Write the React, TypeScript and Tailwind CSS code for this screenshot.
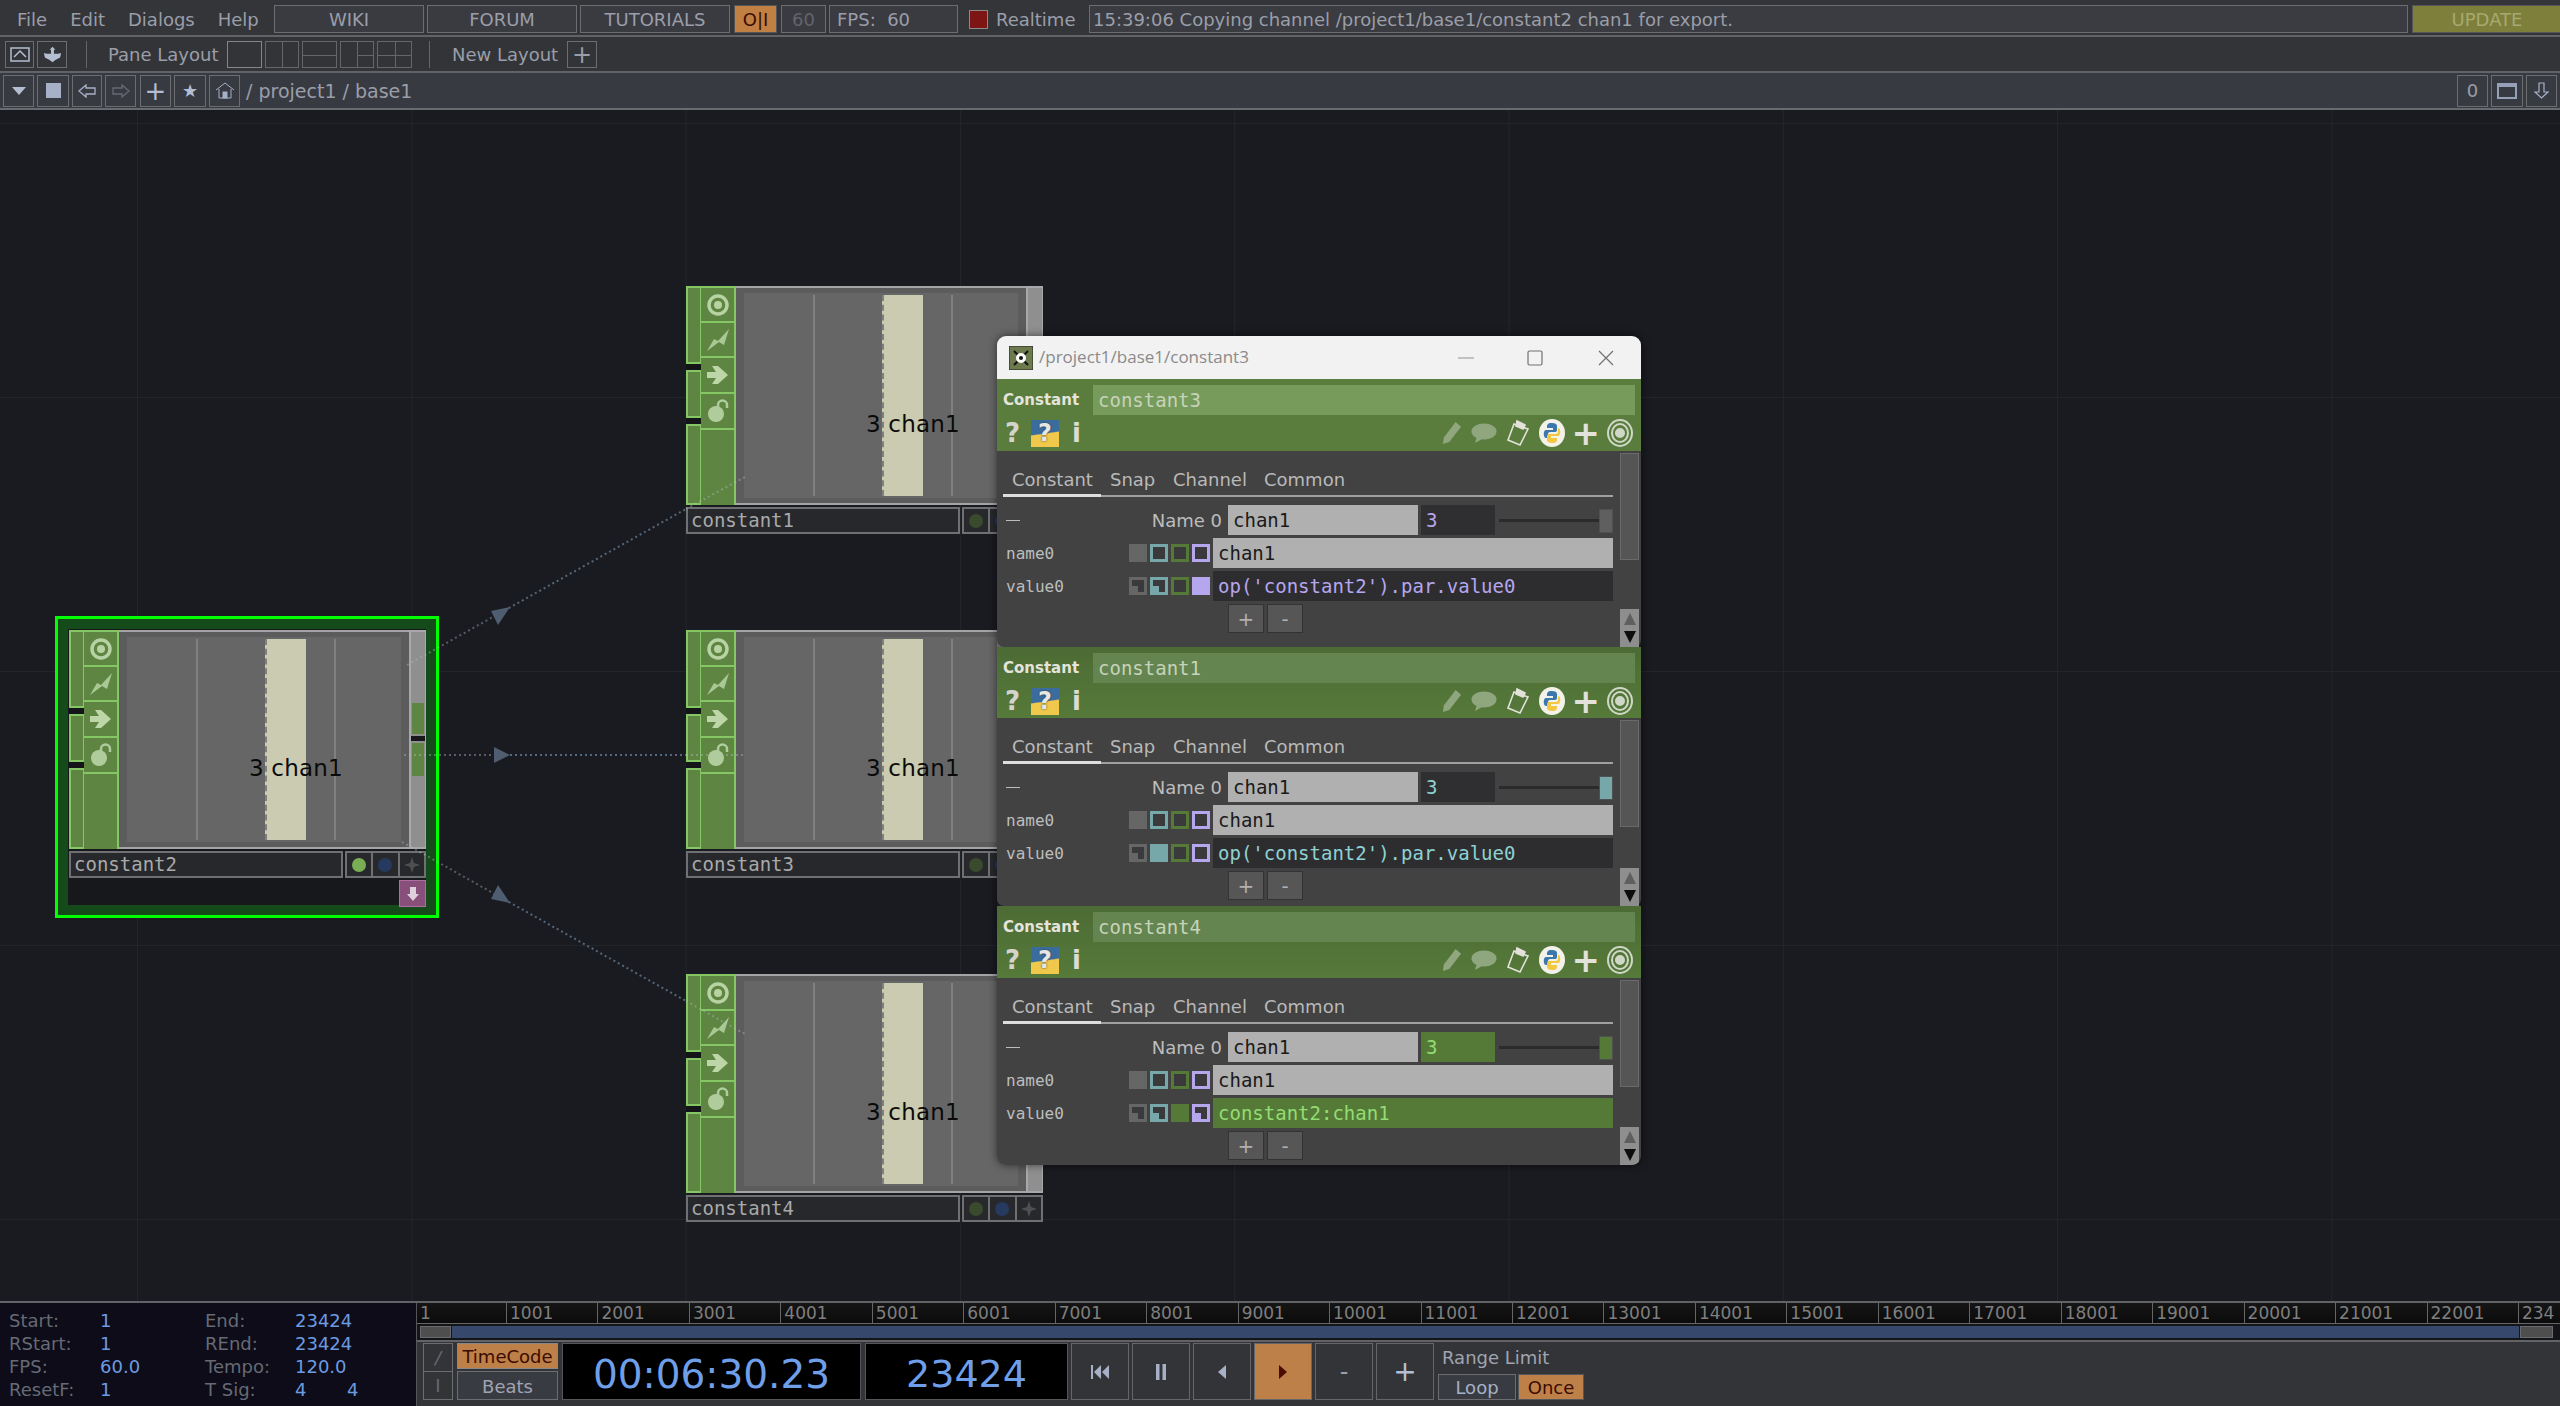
import type { ReactNode } from "react";

const sans = "font-['DejaVu_Sans',sans-serif]";
const mono = "font-['DejaVu_Sans_Mono',monospace]";

function BarBox({ className = "", children }: { className?: string; children?: ReactNode }) {
  return (
    <div className={`flex shrink-0 items-center justify-center border border-[#6c6d70] ${className}`}>
      {children}
    </div>
  );
}

function LayoutBox({ className = "", children }: { className?: string; children?: ReactNode }) {
  return <div className={`relative h-[27px] shrink-0 border border-[#65666a] ${className}`}>{children}</div>;
}

function TopBars() {
  return (
    <div className="shrink-0">
      {/* menu row */}
      <div className="flex h-[37px] items-center border-b-2 border-[#626366] bg-[#343539] pt-[3px] text-[18px] text-[#9a9ea9]">
        <div className="flex w-[274px] shrink-0 gap-[23px] pl-[17px]">
          <span>File</span>
          <span>Edit</span>
          <span>Dialogs</span>
          <span>Help</span>
        </div>
        <div className="flex h-[28px] gap-[3px]">
          <BarBox className="w-[150px] bg-[#3a3b41]">WIKI</BarBox>
          <BarBox className="w-[150px] bg-[#3a3b41]">FORUM</BarBox>
          <BarBox className="w-[150px] bg-[#3a3b41]">TUTORIALS</BarBox>
          <BarBox className="ml-[1px] w-[43px] border-[#555] bg-[#c07f43] text-[#3b0b00]">O|I</BarBox>
          <BarBox className="ml-[1px] w-[45px] bg-[#3a3b41] text-[#62646a]">60</BarBox>
          <BarBox className="w-[129px] justify-start bg-[#3a3b41] pl-[7px]">FPS:&nbsp; 60</BarBox>
          <div className="ml-[8px] h-[19px] w-[19px] self-center border border-[#8a8a8a] bg-[#7d1515]" />
          <span className="ml-[5px] w-[90px] self-center">Realtime</span>
          <BarBox className="w-[1319px] justify-start bg-[#3b3c41] pl-[3px]">
            15:39:06 Copying channel /project1/base1/constant2 chan1 for export.
          </BarBox>
          <BarBox className="ml-[1px] w-[150px] border-[#55565a] bg-[#7f7f3c] text-[#a6a970]">UPDATE</BarBox>
        </div>
      </div>
      {/* pane layout row */}
      <div className="flex h-[36px] items-center border-b-2 border-[#626366] bg-[#333438] pl-[5px] pt-[1px] text-[18px] text-[#9a9ea9]">
        <BarBox className="h-[27px] w-[29px]">
          <svg width="20" height="15" viewBox="0 0 20 15" fill="none" stroke="#b4bed2" strokeWidth="1.5">
            <rect x="1" y="1" width="18" height="13" />
            <path d="M4 10 L10 4 L16 10" />
          </svg>
        </BarBox>
        <BarBox className="ml-[3px] h-[27px] w-[30px]">
          <svg width="21" height="17" viewBox="0 0 22 22" fill="#b4bed2" preserveAspectRatio="none">
            <path d="M11 1 L14 5 L12.5 5 L12.5 10 L17 10 L20 9 L19 15 L14 18 L11 21 L8 18 L3 15 L2 9 L5 10 L9.5 10 L9.5 5 L8 5 Z" />
          </svg>
        </BarBox>
        <div className="ml-[19px] h-[27px] w-px bg-[#65666a]" />
        <span className="ml-[21px] w-[119px] shrink-0">Pane Layout</span>
        <div className="flex gap-[3px]">
          <LayoutBox className="w-[35px] border-[#85868a]" />
          <LayoutBox className="w-[34px]">
            <div className="absolute inset-y-0 left-1/2 w-px bg-[#65666a]" />
          </LayoutBox>
          <LayoutBox className="w-[35px]">
            <div className="absolute inset-x-0 top-1/2 h-px bg-[#65666a]" />
          </LayoutBox>
          <LayoutBox className="w-[34px]">
            <div className="absolute inset-y-0 left-1/2 w-px bg-[#65666a]" />
            <div className="absolute right-0 top-1/2 h-px w-1/2 bg-[#65666a]" />
          </LayoutBox>
          <LayoutBox className="w-[35px]">
            <div className="absolute inset-y-0 left-1/2 w-px bg-[#65666a]" />
            <div className="absolute inset-x-0 top-1/2 h-px bg-[#65666a]" />
          </LayoutBox>
        </div>
        <div className="ml-[17px] h-[27px] w-px bg-[#65666a]" />
        <span className="ml-[22px] w-[115px] shrink-0">New Layout</span>
        <BarBox className="h-[27px] w-[30px] text-[24px] leading-none">+</BarBox>
      </div>
      {/* path row */}
      <div className="flex h-[37px] items-center border-b-2 border-[#6a6b6e] bg-[#383a42] pl-[3px] text-[18px] text-[#9a9ea9]">
        <div className="flex gap-[3px]">
          <BarBox className="h-[32px] w-[31px]">
            <svg width="14" height="8" viewBox="0 0 14 8" fill="#b4bed2"><path d="M0 0 H14 L7 8 Z" /></svg>
          </BarBox>
          <BarBox className="h-[32px] w-[32px]">
            <div className="h-[15px] w-[15px] bg-[#a6b0c6]" />
          </BarBox>
          <BarBox className="h-[32px] w-[30px]">
            <svg width="18" height="14" viewBox="0 0 18 14" fill="none" stroke="#a6b0c6" strokeWidth="1.3"><path d="M1 7 L8 1 V4 H17 V10 H8 V13 Z" /></svg>
          </BarBox>
          <BarBox className="h-[32px] w-[31px]">
            <svg width="18" height="14" viewBox="0 0 18 14" fill="none" stroke="#666a74" strokeWidth="1.3"><path d="M17 7 L10 1 V4 H1 V10 H10 V13 Z" /></svg>
          </BarBox>
          <BarBox className="ml-[1px] h-[32px] w-[31px] text-[26px] leading-none text-[#b4bed2]">+</BarBox>
          <BarBox className="h-[32px] w-[32px] text-[18px] text-[#b4bed2]">★</BarBox>
          <BarBox className="h-[32px] w-[31px]">
            <svg width="20" height="17" viewBox="0 0 20 17" fill="none" stroke="#a6b0c6" strokeWidth="1">
              <path d="M1 8 L10 1 L19 8 M4 7 V16 H16 V7" />
              <rect x="8" y="10" width="4" height="6" fill="#a6b0c6" />
            </svg>
          </BarBox>
        </div>
        <span className="ml-[6px] whitespace-pre pt-[1px] text-[19px]">/ project1 / base1</span>
        <div className="ml-auto flex gap-[3px] pr-[3px]">
          <BarBox className="h-[32px] w-[31px]">0</BarBox>
          <BarBox className="h-[32px] w-[32px]">
            <div className="h-[16px] w-[20px] border-2 border-t-[4px] border-[#95a0b8]" />
          </BarBox>
          <BarBox className="h-[32px] w-[31px]">
            <svg width="15" height="17" viewBox="0 0 15 17" fill="none" stroke="#a6b0c6" strokeWidth="1.2"><path d="M5 1 H10 V10 H14 L7.5 16 L1 10 H5 Z" /></svg>
          </BarBox>
        </div>
      </div>
    </div>
  );
}

function NodeCell({ className = "", children }: { className?: string; children?: ReactNode }) {
  return (
    <div className={`flex w-full items-center justify-center border-b-2 border-[#85c764] ${className}`}>{children}</div>
  );
}

function NodeTarget() {
  return (
    <svg width="22" height="22" viewBox="0 0 22 22" fill="none">
      <circle cx="11" cy="11" r="9" stroke="#b7d2a3" strokeWidth="3.5" />
      <circle cx="11" cy="11" r="4" fill="#b7d2a3" />
    </svg>
  );
}

function Node({ name, className, selected }: { name: string; className: string; selected?: boolean }) {
  return (
    <div className={`absolute w-[357px] ${className}`}>
      <div className="flex h-[219px]">
        <div className="flex w-[15px] shrink-0 flex-col bg-[#141518]">
          <div className="h-[78px] border-2 border-r border-[#85c764] bg-[#5f8543]" />
          <div className="mt-[6px] h-[48px] border-2 border-r border-[#85c764] bg-[#5f8543]" />
          <div className="mt-[6px] flex-1 border-2 border-r border-[#85c764] bg-[#5f8543]" />
        </div>
        <div className="flex w-[35px] shrink-0 flex-col border-2 border-b-0 border-l-0 border-[#85c764] bg-[#5f8543]">
          <NodeCell className="h-[35px]"><NodeTarget /></NodeCell>
          <NodeCell className="h-[35px]">
            <svg width="24" height="24" viewBox="0 0 24 24" fill="#a9c893">
              <path d="M1 23 L8 11 L12 13 L23 1 L18 17 L13 14 Z" />
            </svg>
          </NodeCell>
          <NodeCell className="h-[36px]">
            <svg width="22" height="20" viewBox="0 0 22 20" fill="#bcd6a8">
              <path d="M0 7 H9 L5 1 H11 L21 10 L11 19 H5 L9 13 H0 Z" />
            </svg>
          </NodeCell>
          <NodeCell className="h-[36px]">
            <svg width="22" height="24" viewBox="0 0 22 24">
              <circle cx="9" cy="15" r="8" fill="#b0cc9b" />
              <path d="M11 8 V6 a4.5 4.5 0 0 1 9 0 V9" fill="none" stroke="#b0cc9b" strokeWidth="2.5" />
            </svg>
          </NodeCell>
          <div className="flex-1" />
        </div>
        <div className="flex min-w-0 flex-1 border-y-2 border-[#a4a4a6] bg-[#5c5c5c] px-[8px] py-[5px]">
          <div className="relative flex-1 bg-[#666666] pt-[2px]">
            <div className="absolute inset-y-[2px] left-[69px] w-[2px] bg-[#808080]" />
            <div className="absolute inset-y-[2px] left-[207px] w-[2px] bg-[#808080]" />
            <div className="absolute inset-y-[2px] left-[138px] w-[41px] border-l-2 border-dashed border-l-[#7f7f7f] bg-[#cbcbb1]" />
            <span className={`absolute left-[122px] top-[120px] text-[23px] leading-none tracking-[0.2px] text-[#0a0a0a] ${sans}`}>
              3 chan1
            </span>
          </div>
        </div>
        <div className="flex w-[17px] shrink-0 flex-col border-y-2 border-l-2 border-r border-[#a8a8ac] bg-[#8f8f8f]">
          {selected && (
            <>
              <div className="mx-[1px] mt-[71px] h-[31px] bg-[#5f8543]" />
              <div className="mt-[2px] h-[5px] bg-[#17181c]" />
              <div className="mx-[1px] mt-[2px] h-[33px] bg-[#5f8543]" />
            </>
          )}
        </div>
      </div>
      <div className="mt-[2px] flex h-[27px] gap-[2px]">
        <div className={`flex flex-1 items-center border-2 border-[#6f7072] bg-[#27282c] pl-[3px] text-[19px] text-[#a9a9a9] ${mono}`}>
          {name}
        </div>
        <div className="flex w-[81px] shrink-0 border-2 border-[#6f7072] bg-[#27282c]">
          <div className="flex flex-1 items-center justify-center border-r-2 border-[#6f7072]">
            <div className={`h-[14px] w-[14px] rounded-full ${selected ? "bg-[#79ae55]" : "bg-[#394a2d]"}`} />
          </div>
          <div className="flex flex-1 items-center justify-center border-r-2 border-[#6f7072]">
            <div className="h-[14px] w-[14px] rounded-full bg-[#26395f]" />
          </div>
          <div className="flex flex-1 items-center justify-center">
            <svg width="16" height="16" viewBox="0 0 16 16" fill="#4f4f4f"><path d="M8 0 L10 6 L16 8 L10 10 L8 16 L6 10 L0 8 L6 6 Z" /></svg>
          </div>
        </div>
      </div>
      {selected && (
        <div className="ml-auto mt-[2px] flex h-[27px] w-[27px] items-center justify-center border border-[#b06ea0] bg-[#884f7b]">
          <svg width="14" height="14" viewBox="0 0 14 14" fill="#dfcfdb"><path d="M4 0 H10 V7 H13 L7 14 L1 7 H4 Z" /></svg>
        </div>
      )}
    </div>
  );
}

function Wires() {
  return (
    <svg className="absolute inset-0 z-10" width="2560" height="1192" viewBox="0 1 2560 1192" fill="none">
      <g stroke="#55677a" strokeWidth="2" strokeDasharray="2 3">
        <path d="M500 504 L686 400" />
        <path d="M500 646 L686 646" />
        <path d="M500 788 L686 892" />
      </g>
      <g stroke="#b6bec6" strokeWidth="2" strokeDasharray="2 3" opacity="0.4">
        <path d="M407 556 L500 504" />
        <path d="M404 646 L500 646" />
        <path d="M402 733 L500 788" />
        <path d="M686 400 L745 368" />
        <path d="M686 646 L745 646" />
        <path d="M686 892 L745 925" />
      </g>
      <g fill="#4e5e70">
        <path d="M510 498 L491 502 L498 516 Z" />
        <path d="M510 646 L494 638 L494 654 Z" />
        <path d="M510 794 L498 776 L491 790 Z" />
      </g>
    </svg>
  );
}

type SquareKind = "solid" | "outline" | "half";

function Square({ kind, color }: { kind: SquareKind; color: string }) {
  return (
    <svg width="18" height="18" viewBox="0 0 18 18" className="shrink-0">
      <rect width="18" height="18" fill={color} />
      {kind === "outline" && <rect x="3" y="3" width="12" height="12" fill="#3a3a3c" />}
      {kind === "half" && <path d="M3 3 H15 V15 H9 V9 H3 Z" fill="#3a3a3c" />}
    </svg>
  );
}

function HeaderIcons() {
  return (
    <div className="flex h-[28px] items-center pl-[8px] pr-[8px]">
      <span className="w-[26px] text-[26px] font-bold leading-none text-[#d4d4cc]">?</span>
      <div className="flex h-[27px] w-[28px] items-center justify-center bg-[linear-gradient(172deg,#3a6d9e_48%,#f0c94c_52%)] text-[24px] font-bold leading-none text-[#e6e6e6] [text-shadow:0_0_2px_#333]">
        ?
      </div>
      <span className="ml-[13px] text-[26px] font-bold leading-none text-[#dcdcd4]">i</span>
      <div className="ml-auto flex items-center gap-[8px]">
        <svg width="20" height="26" viewBox="0 0 22 26" fill="#8fa67f">
          <path d="M15 1 L21 6 L8 23 L1 25 L2 18 Z" />
        </svg>
        <svg className="ml-[1px]" width="26" height="20" viewBox="0 0 26 20" fill="#8fa67f">
          <ellipse cx="13" cy="8.5" rx="12.5" ry="8" />
          <path d="M6 13 L4 20 L13 15 Z" />
        </svg>
        <svg width="26" height="28" viewBox="0 0 26 28" fill="none" stroke="#e2e2da" strokeWidth="1.6">
          <path d="M9 5 L23 10 L15 26 L3 21 Z" />
          <path d="M12 2 L20 6 L18 10 L11 7 Z" fill="#e2e2da" />
        </svg>
        <svg width="26" height="28" viewBox="0 0 26 28">
          <ellipse cx="13" cy="14" rx="13" ry="14" fill="#f2f2ea" />
          <path d="M13 4 C8 4 8 6 8 9 H14 V11 H7 C4 11 4 19 7 19 H9 V15 C9 13 11 13 13 13 H16 C18 13 18 11 18 10 V7 C18 5 16 4 13 4 Z" fill="#3a78ad" />
          <path d="M13 24 C18 24 18 22 18 19 H12 V17 H19 C22 17 22 9 19 9 V13 C19 15 17 15 13 15 H10 C8 15 8 17 8 18 V21 C8 23 10 24 13 24 Z" fill="#f3c742" />
        </svg>
        <span className={`-mx-[1px] text-[34px] font-bold leading-[26px] text-[#e2e2da] ${sans}`}>+</span>
        <svg width="26" height="28" viewBox="0 0 26 28" fill="none" stroke="#cfd8c6" strokeWidth="2">
          <ellipse cx="13" cy="14" rx="12" ry="13" />
          <ellipse cx="13" cy="14" rx="8" ry="9" />
          <circle cx="13" cy="14" r="4" fill="#cfd8c6" />
        </svg>
      </div>
    </div>
  );
}

type SectionProps = {
  name: string;
  accent: string;
  thumb: string;
  green?: boolean;
  active?: boolean;
  value: string;
  squares: SquareKind[];
  headerClass: string;
  panelClass: string;
};

function ParamSection({ name, accent, thumb, green, active, value, squares, headerClass, panelClass }: SectionProps) {
  const colors = ["#666666", "#76a8aa", "#557a38", "#b6a6ee"];
  return (
    <div className="shrink-0">
      <div className={`${headerClass} ${active ? "bg-[#5a7d3d]" : "bg-[linear-gradient(#4c6b35,#567a3a)]"} pt-[6px]`}>
        <div className="flex h-[30px] items-center">
          <span className="w-[96px] shrink-0 pl-[6px] text-[15px] font-bold text-[#e4e4dc]">Constant</span>
          <div className={`mr-[6px] flex h-full flex-1 items-center pl-[5px] text-[19px] text-[#c6d3ba] ${mono} ${active ? "bg-[#769b5b]" : "bg-[#64854f]"}`}>
            {name}
          </div>
        </div>
        <div className="mt-[4px]">
          <HeaderIcons />
        </div>
      </div>
      <div className={`flex rounded-b-[7px] bg-[#424242] pl-[6px] pr-[2px] ${panelClass}`}>
        <div className="min-w-0 flex-1 pr-[7px]">
          <div className="flex h-[46px] items-end border-b-2 border-[#a0a0a0] text-[18px] text-[#b9b9b9]">
            <div className="relative h-[36px] w-[98px] pl-[9px] pt-[7px]">
              Constant
              <div className="absolute -bottom-[2px] left-0 right-0 h-[3px] bg-[#dedede]" />
            </div>
            <span className="ml-[9px] h-[36px] w-[63px] pt-[7px]">Snap</span>
            <span className="h-[36px] w-[91px] pt-[7px]">Channel</span>
            <span className="h-[36px] pt-[7px]">Common</span>
          </div>
          <div className="mt-[8px] flex h-[30px] items-center">
            <span className="w-[17px] pl-[3px]"><div className="h-[1px] w-[14px] bg-[#bdbdbd]" /></span>
            <span className="w-[202px] text-right text-[18px] text-[#bdbdbd]">Name 0</span>
            <div className={`ml-[6px] flex h-full w-[190px] items-center bg-[#b0b0b0] pl-[5px] text-[19px] text-[#1a1a1a] ${mono}`}>chan1</div>
            <div
              className={`ml-[3px] flex h-full w-[74px] items-center pl-[5px] text-[19px] ${mono} ${green ? "bg-[#557a38]" : "bg-[#2f2f32]"}`}
              style={{ color: accent }}
            >
              3
            </div>
            <div className="relative ml-[4px] h-[3px] flex-1 bg-[#2b2b2b]">
              <div className="absolute -top-[10px] right-0 h-[24px] w-[14px] border border-[#505050]" style={{ backgroundColor: thumb }} />
            </div>
          </div>
          <div className="mt-[3px] flex h-[30px] items-center">
            <span className={`w-[126px] shrink-0 pl-[3px] pt-[2px] text-[16px] text-[#bdbdbd] ${mono}`}>name0</span>
            <div className="flex gap-[3px]">
              <Square kind="solid" color={colors[0]} />
              <Square kind="outline" color={colors[1]} />
              <Square kind="outline" color={colors[2]} />
              <Square kind="outline" color={colors[3]} />
            </div>
            <div className={`ml-[3px] flex h-full flex-1 items-center bg-[#b0b0b0] pl-[5px] text-[19px] text-[#1a1a1a] ${mono}`}>chan1</div>
          </div>
          <div className="mt-[3px] flex h-[30px] items-center">
            <span className={`w-[126px] shrink-0 pl-[3px] pt-[2px] text-[16px] text-[#bdbdbd] ${mono}`}>value0</span>
            <div className="flex gap-[3px]">
              {squares.map((kind, i) => (
                <Square key={i} kind={kind} color={colors[i]} />
              ))}
            </div>
            <div
              className={`ml-[3px] flex h-full flex-1 items-center pl-[5px] text-[19px] ${mono} ${green ? "bg-[#557a38]" : "bg-[#2d2d30]"}`}
              style={{ color: accent }}
            >
              {value}
            </div>
          </div>
          <div className="ml-[225px] mt-[3px] flex gap-[3px]">
            <div className="flex h-[29px] w-[36px] items-center justify-center border border-[#333] bg-[#565656] text-[20px] leading-none text-[#b0b0b0]">+</div>
            <div className="flex h-[29px] w-[36px] items-center justify-center border border-[#333] bg-[#565656] text-[20px] leading-none text-[#b0b0b0]">-</div>
          </div>
        </div>
        <div className="flex w-[19px] shrink-0 flex-col pt-[2px]">
          <div className="h-[107px] border border-[#6a6a6a] bg-[#555555]" />
          <div className="flex-1" />
          <div className="flex h-[38px] shrink-0 flex-col items-center justify-center gap-[6px] bg-[#8e8e8e]">
            <svg width="12" height="12" viewBox="0 0 12 12" fill="#5f5f5f"><path d="M6 0 L12 12 H0 Z" /></svg>
            <svg width="12" height="12" viewBox="0 0 12 12" fill="#0d0d0d"><path d="M0 0 H12 L6 12 Z" /></svg>
          </div>
        </div>
      </div>
    </div>
  );
}

function ParamWindow() {
  return (
    <div className="absolute left-[997px] top-[226px] z-20 flex w-[644px] flex-col overflow-hidden rounded-[9px] shadow-[0_0_8px_rgba(0,0,0,0.55)]">
      <div className="flex h-[43px] shrink-0 items-center bg-[#f2f2f2]">
        <svg className="ml-[12px]" width="24" height="24" viewBox="0 0 24 24">
          <rect width="24" height="24" fill="#6c7a4e" stroke="#222" />
          <path d="M5 5 L19 19 M19 5 L5 19" stroke="#111" strokeWidth="2" />
          <circle cx="12" cy="12" r="5" fill="#fff" />
          <circle cx="12" cy="12" r="2" fill="#111" />
        </svg>
        <span className="ml-[6px] -translate-y-[1px] font-['Open_Sans',sans-serif] text-[17px] text-[#8a8a8a]">/project1/base1/constant3</span>
        <svg className="ml-auto mr-[53px]" width="16" height="16" viewBox="0 0 16 16" stroke="#909090" fill="none"><path d="M0 8 H16" /></svg>
        <svg className="mr-[55px]" width="16" height="16" viewBox="0 0 16 16" stroke="#707070" fill="none" strokeWidth="1.2"><rect x="1" y="1" width="14" height="14" rx="1.5" /></svg>
        <svg className="mr-[27px]" width="16" height="16" viewBox="0 0 16 16" stroke="#707070" fill="none" strokeWidth="1.2"><path d="M1 1 L15 15 M15 1 L1 15" /></svg>
      </div>
      <ParamSection
        name="constant3"
        active
        accent="#b6a6ee"
        thumb="#5f5f5f"
        value="op('constant2').par.value0"
        squares={["half", "half", "outline", "solid"]}
        headerClass="h-[72px]"
        panelClass="h-[196px]"
      />
      <ParamSection
        name="constant1"
        accent="#8ed2d2"
        thumb="#76a8aa"
        value="op('constant2').par.value0"
        squares={["half", "solid", "outline", "outline"]}
        headerClass="h-[71px]"
        panelClass="h-[188px]"
      />
      <ParamSection
        name="constant4"
        green
        accent="#93dc72"
        thumb="#557a38"
        value="constant2:chan1"
        squares={["half", "half", "solid", "half"]}
        headerClass="h-[72px]"
        panelClass="h-[187px]"
      />
    </div>
  );
}

function Canvas() {
  return (
    <div className="relative flex-1 overflow-hidden bg-[#191b20] bg-[linear-gradient(#23252a_1px,transparent_1px),linear-gradient(90deg,#23252a_1px,transparent_1px)] bg-[size:274.3px_274px] bg-[position:137px_13px]">
      {/* selected frame */}
      <div className="absolute left-[55px] top-[506px] h-[302px] w-[384px] border-[3px] border-[#00ff00] bg-[#17181c]">
        <div className="h-full w-full border-[10px] border-[#154a1a]" />
      </div>
      <Node name="constant2" className="left-[69px] top-[520px]" selected />
      <Node name="constant1" className="left-[686px] top-[176px]" />
      <Node name="constant3" className="left-[686px] top-[520px]" />
      <Node name="constant4" className="left-[686px] top-[864px]" />
      <Wires />
      <ParamWindow />
    </div>
  );
}

const ticks = [
  "1001", "2001", "3001", "4001", "5001", "6001", "7001", "8001", "9001", "10001", "11001",
  "12001", "13001", "14001", "15001", "16001", "17001", "18001", "19001", "20001", "21001", "22001",
];

const stats = [
  ["Start:", "1", "End:", "23424"],
  ["RStart:", "1", "REnd:", "23424"],
  ["FPS:", "60.0", "Tempo:", "120.0"],
  ["ResetF:", "1", "T Sig:", "4"],
];

function Transport({ className = "", children }: { className?: string; children: ReactNode }) {
  return (
    <div className={`flex h-[57px] w-[58px] shrink-0 items-center justify-center border border-[#65666a] ${className}`}>
      {children}
    </div>
  );
}

function Timeline() {
  return (
    <div className="flex h-[105px] shrink-0 border-t-2 border-[#626366] text-[18px]">
      <div className="w-[417px] shrink-0 border-r border-[#55565a] bg-[#0d0c18] pt-[6px]">
        {stats.map((row, i) => (
          <div key={i} className="flex h-[23px] items-center">
            <span className="w-[100px] shrink-0 pl-[9px] text-[#666a75]">{row[0]}</span>
            <span className="w-[105px] shrink-0 text-[#6d9be0]">{row[1]}</span>
            <span className="w-[90px] shrink-0 text-[#666a75]">{row[2]}</span>
            <span className="w-[52px] shrink-0 text-[#6d9be0]">{row[3]}</span>
            {i === 3 && <span className="text-[#6d9be0]">4</span>}
          </div>
        ))}
      </div>
      <div className="flex min-w-0 flex-1 flex-col bg-[#333438]">
        <div className="flex h-[21px] shrink-0 items-center border-b border-[#666] bg-[linear-gradient(#151515,#0b0b0b)] text-[17px] leading-none text-[#7f7f7f]">
          <div className="w-[89px] shrink-0 pl-[3px]">1</div>
          {ticks.map((t) => (
            <div key={t} className="flex h-full w-[91.46px] shrink-0 items-center border-l border-[#666] pl-[3px]">{t}</div>
          ))}
          <div className="flex h-full flex-1 items-center border-l border-[#666] pl-[3px]">234</div>
        </div>
        <div className="flex h-[18px] shrink-0 items-center gap-[1px] border-b-2 border-[#626366] bg-[#141518] px-[3px]">
          <div className="h-[12px] w-[31px] shrink-0 border border-[#6a6a6a] bg-[#4e4e4e]" />
          <div className="h-[12px] flex-1 bg-[#36486b]" />
          <div className="h-[12px] w-[33px] shrink-0 border border-[#6a6a6a] bg-[#4e4e4e]" />
          <div className="w-[3px] shrink-0" />
        </div>
        <div className="flex flex-1 items-start pl-[6px] pt-[1px] text-[#a0a4b0]">
          <div className="flex flex-col">
            <BarBox className="h-[29px] w-[30px] italic text-[#666a74]">/</BarBox>
            <BarBox className="h-[28px] w-[30px] border-t-0 text-[#666a74]">I</BarBox>
          </div>
          <div className="ml-[4px] flex w-[101px] flex-col gap-[2px]">
            <BarBox className="h-[26px] w-full border-[#888] bg-[#be8049] text-[#3b0b00]">TimeCode</BarBox>
            <BarBox className="h-[29px] w-full bg-[#393b42] pt-[2px] text-[#a0a4b0]">Beats</BarBox>
          </div>
          <div className="ml-[4px] flex h-[57px] w-[299px] items-center justify-center border border-[#55565a] bg-black pt-[5px] text-[39px] leading-none text-[#6f9fe8]">
            00:06:30.23
          </div>
          <div className="ml-[4px] flex h-[57px] w-[203px] items-center justify-center border border-[#55565a] bg-black pt-[5px] text-[38px] leading-none text-[#6f9fe8]">
            23424
          </div>
          <div className="ml-[3px] flex gap-[3px]">
            <Transport>
              <svg width="18" height="14" viewBox="0 0 18 14" fill="#a6b0c6"><path d="M0 0 H2 V14 H0 Z M10 0 V14 L3 7 Z M18 0 V14 L11 7 Z" /></svg>
            </Transport>
            <Transport>
              <svg width="10" height="16" viewBox="0 0 10 16" fill="#a6b0c6"><path d="M0 0 H3.5 V16 H0 Z M6.5 0 H10 V16 H6.5 Z" /></svg>
            </Transport>
            <Transport>
              <svg width="8" height="14" viewBox="0 0 8 14" fill="#a6b0c6"><path d="M8 0 V14 L0 7 Z" /></svg>
            </Transport>
            <Transport className="bg-[#be8049]">
              <svg width="8" height="14" viewBox="0 0 8 14" fill="#4a0d00"><path d="M0 0 V14 L8 7 Z" /></svg>
            </Transport>
            <Transport className="text-[24px] leading-none text-[#9a9ea9]">-</Transport>
            <Transport className="text-[28px] leading-none text-[#b4bed2]">+</Transport>
          </div>
          <div className="ml-[4px] flex flex-col">
            <span className="ml-[4px] flex h-[31px] items-center pb-[2px] text-[#a0a4b0]">Range Limit</span>
            <div className="flex gap-[2px]">
              <BarBox className="h-[26px] w-[78px] bg-[#393b42] pt-[1px] text-[#a6b0c6]">Loop</BarBox>
              <BarBox className="h-[26px] w-[66px] border-[#55565a] bg-[#be8049] pt-[1px] text-[#3b0b00]">Once</BarBox>
            </div>
          </div>
        </div>
      </div>
    </div>
  );
}

export default function App() {
  return (
    <div className={`flex h-[1406px] w-[2560px] flex-col overflow-hidden bg-[#191b20] ${sans}`}>
      <TopBars />
      <Canvas />
      <Timeline />
    </div>
  );
}
